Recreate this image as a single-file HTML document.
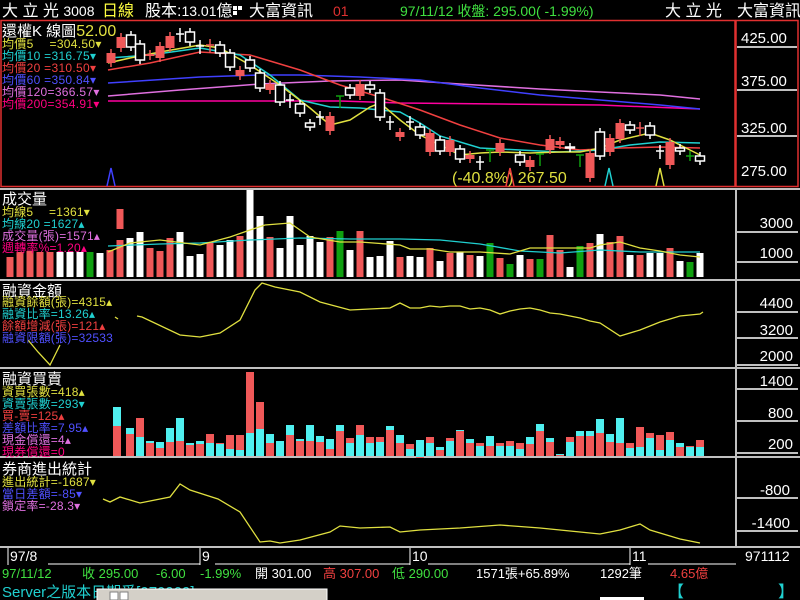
<!DOCTYPE html>
<html><head><meta charset="utf-8"><style>
html,body{margin:0;padding:0;background:#000;width:800px;height:600px;overflow:hidden}
svg{display:block}
text{font-family:"Liberation Sans","Noto Sans CJK TC",sans-serif}
</style></head><body>
<svg id="s" width="800" height="600" xmlns="http://www.w3.org/2000/svg">
<rect width="800" height="600" fill="#000"/>
<g font-size="16">
<text x="2" y="16" fill="#fff">大 立 光 <tspan font-size="14">3008</tspan></text>
<text x="102" y="16" fill="#ffff40">日線</text>
<text x="145" y="16" fill="#fff">股本:<tspan font-size="14">13.01</tspan>億</text>
<rect x="233" y="6" width="4" height="4" fill="#fff"/><rect x="238" y="6" width="4" height="4" fill="#fff"/><rect x="233" y="11" width="4" height="4" fill="#fff"/>
<text x="249" y="16" fill="#fff">大富資訊</text>
<text x="333" y="16" fill="#e03030" font-size="14">01</text>
<text x="400" y="16" fill="#40e040" font-size="14">97/11/12 收盤: 295.00( -1.99%)</text>
<text x="665" y="16" fill="#fff">大 立 光</text>
<text x="737" y="16" fill="#fff">大富資訊</text>
</g>
<rect x="1" y="20.5" width="734" height="166" fill="none" stroke="#e03030" stroke-width="1.5"/>
<rect x="736" y="20.5" width="62" height="166" fill="none" stroke="#e03030" stroke-width="1.5"/>
<g stroke="#c0c0c0" stroke-width="2">
<line x1="737" y1="47" x2="797" y2="47"/><line x1="737" y1="90" x2="797" y2="90"/><line x1="737" y1="136" x2="797" y2="136"/>
</g>
<g fill="#fff" font-size="15">
<text x="741" y="43">425.00</text><text x="741" y="86">375.00</text><text x="741" y="133">325.00</text><text x="741" y="176">275.00</text>
</g>
<g id="ma" fill="none" stroke-width="1.5">
<polyline stroke="#ff00a0" points="108,101 200,101 340,101 400,103 500,104 600,105 700,109"/>
<polyline stroke="#e070e0" points="108,96 180,90 260,84 330,81 400,80 460,84 540,89 600,92 660,95 700,99"/>
<polyline stroke="#4040ff" points="108,83 200,77 260,75 300,75 360,77 420,80 480,88 540,95 600,100 660,105 700,109"/>
<polyline stroke="#f04040" points="108,70 150,63 200,52 250,55 300,70 340,85 380,97 420,110 460,125 500,138 540,145 580,150 620,148 660,147 700,148"/>
<polyline stroke="#20d0d0" points="108,58 150,55 200,48 240,55 270,75 300,100 330,107 360,108 380,110 400,112 420,123 440,136 480,148 520,150 560,152 600,150 630,145 660,142 700,143"/>
<polyline stroke="#e0e040" points="108,63 130,58 160,52 200,45 220,48 250,65 280,85 310,108 330,125 350,120 370,107 380,103 400,120 420,135 440,145 460,155 480,153 500,152 530,153 560,152 580,152 600,148 620,140 650,133 670,140 690,150 700,155"/>
</g>
<g id="cd"></g>
<g font-size="15">
<text x="2" y="36" fill="#fff">還權K 線圖<tspan fill="#e0e040" font-size="16">52.00</tspan></text>
</g>
<g font-size="12" letter-spacing="0.3">
<text x="2" y="48" fill="#e0e040">均價5　 =304.50▾</text>
<text x="2" y="60" fill="#20d0d0">均價10 =316.75▾</text>
<text x="2" y="72" fill="#f04040">均價20 =310.50▾</text>
<text x="2" y="84" fill="#5050ff">均價60 =350.84▾</text>
<text x="2" y="96" fill="#e070e0">均價120=366.57▾</text>
<text x="2" y="108" fill="#ff0080">均價200=354.91▾</text>
</g>
<text x="452" y="183" fill="#e0e040" font-size="16">(-40.8%) 267.50</text>
<g fill="none" stroke-width="1.5">
<path d="M107,186 L111,168 L115,186" stroke="#4040ff"/>
<path d="M506,186 L510,168 L514,186" stroke="#f04040"/>
<path d="M605,186 L609,168 L613,186" stroke="#20d0d0"/>
<path d="M656,186 L660,168 L664,186" stroke="#e0e040"/>
</g>
<g stroke="#c0c0c0" stroke-width="2">
<line x1="0" y1="189" x2="800" y2="189"/>
<line x1="0" y1="280" x2="800" y2="280"/>
<line x1="0" y1="368" x2="800" y2="368"/>
<line x1="0" y1="457" x2="800" y2="457"/>
<line x1="0" y1="547" x2="800" y2="547"/>
<line x1="736" y1="189" x2="736" y2="547"/>
<line x1="737" y1="232" x2="798" y2="232"/><line x1="737" y1="262" x2="798" y2="262"/>
<line x1="737" y1="312" x2="798" y2="312"/><line x1="737" y1="338" x2="798" y2="338"/><line x1="737" y1="365" x2="798" y2="365"/>
<line x1="737" y1="389" x2="798" y2="389"/><line x1="737" y1="421" x2="798" y2="421"/><line x1="737" y1="453" x2="798" y2="453"/>
<line x1="737" y1="498" x2="798" y2="498"/><line x1="737" y1="531" x2="798" y2="531"/>
</g>
<g fill="#fff" font-size="15" text-anchor="end">
<text x="793" y="228">3000</text><text x="793" y="258">1000</text>
<text x="793" y="308">4400</text><text x="793" y="335">3200</text><text x="793" y="361">2000</text>
<text x="793" y="386">1400</text><text x="793" y="418">800</text><text x="793" y="449">200</text>
<text x="790" y="495">-800</text><text x="790" y="528">-1400</text>
</g>
<g id="vb"></g>
<g id="tb"></g>
<g fill="none" stroke-width="1.3">
<polyline stroke="#20d0d0" points="108,246 160,244 200,243 250,240 300,238 350,239 400,239 440,240 480,244 520,251 560,253 600,250 640,252 680,252 700,252"/>
<polyline stroke="#e0e040" points="108,252 130,243 160,240 200,245 230,237 250,230 265,225 290,223 310,237 340,242 360,242 400,245 410,249 430,249 450,252 480,252 510,254 530,248 560,248 590,248 600,245 620,242 640,248 660,251 680,255 700,257"/>
<polyline stroke="#e0e040" points="28,340 38,352 50,365 60,345"/>
<polyline stroke="#e0e040" points="115,317 118,319"/>
<polyline stroke="#e0e040" points="137,316 142,317 180,335 200,337 220,333 240,320 255,290 262,283 275,287 300,292 320,302 350,310 390,308 400,303 410,308 420,308 430,306 440,307 450,306 460,306 470,309 480,308 490,310 500,314 510,311 520,309 530,308 540,310 550,313 560,314 570,316 580,318 590,321 600,323 620,336 640,330 660,322 680,316 700,314 703,312"/>
<polyline stroke="#e0e040" points="103,499 110,502 120,497 140,503 170,497 180,484 190,490 218,499 240,512 260,542 270,541 280,543 300,540 330,532 340,526 360,528 390,527 400,532 420,530 460,528 500,525 540,528 580,532 600,534 620,530 640,524 650,530 670,536 680,539 700,543"/>
</g>
<g font-size="15" fill="#fff"><text x="2" y="204">成交量</text><text x="2" y="296">融資金額</text><text x="2" y="384">融資買賣</text><text x="2" y="474">券商進出統計</text></g>
<g font-size="12" letter-spacing="0.2">
<text x="2" y="216" fill="#e0e040">均線5　 =1361▾</text>
<text x="2" y="228" fill="#20d0d0">均線20 =1627▴</text>
<text x="2" y="240" fill="#e070e0">成交量(張)=1571▴</text>
<text x="2" y="252" fill="#ff0080">週轉率%=1.20▴</text>
<text x="2" y="306" fill="#e0e040">融資餘額(張)=4315▴</text>
<text x="2" y="318" fill="#20d0d0">融資比率=13.26▴</text>
<text x="2" y="330" fill="#f04040">餘額增減(張)=121▴</text>
<text x="2" y="342" fill="#5050ff">融資限額(張)=32533</text>
<text x="2" y="396" fill="#e0e040">資買張數=418▴</text>
<text x="2" y="408" fill="#20d0d0">資賣張數=293▾</text>
<text x="2" y="420" fill="#f04040">買-賣=125▴</text>
<text x="2" y="432" fill="#5050ff">差額比率=7.95▴</text>
<text x="2" y="444" fill="#e070e0">現金償還=4▴</text>
<text x="2" y="456" fill="#ff0080">現券償還=0</text>
<text x="2" y="486" fill="#e0e040">進出統計=-1687▾</text>
<text x="2" y="498" fill="#5050ff">當日差額=-85▾</text>
<text x="2" y="510" fill="#e070e0">鎖定率=-28.3▾</text>
</g>
<g stroke="#fff" stroke-width="1">
<line x1="8" y1="548" x2="8" y2="565"/><line x1="200" y1="548" x2="200" y2="565"/><line x1="410" y1="548" x2="410" y2="565"/><line x1="630" y1="548" x2="630" y2="565"/>
<line x1="48" y1="564" x2="200" y2="564"/><line x1="215" y1="564" x2="410" y2="564"/><line x1="428" y1="564" x2="630" y2="564"/><line x1="648" y1="564" x2="736" y2="564"/>
</g>
<g fill="#fff" font-size="14"><text x="10" y="561">97/8</text><text x="202" y="561">9</text><text x="412" y="561">10</text><text x="632" y="561">11</text><text x="745" y="561">971112</text></g>
<g font-size="13">
<text x="2" y="578" fill="#40e040">97/11/12</text>
<text x="82" y="578" fill="#40e040">收 295.00</text>
<text x="156" y="578" fill="#40e040">-6.00</text>
<text x="200" y="578" fill="#40e040">-1.99%</text>
<text x="255" y="578" fill="#fff">開 301.00</text>
<text x="323" y="578" fill="#f04040">高 307.00</text>
<text x="392" y="578" fill="#40e040">低 290.00</text>
<text x="476" y="578" fill="#fff">1571張+65.89%</text>
<text x="600" y="578" fill="#fff">1292筆</text>
<text x="670" y="578" fill="#f04040">4.65億</text>
</g>
<text x="2" y="597" fill="#20d0d0" font-size="15">Server之版本日期爲[970909]</text>
<rect x="97" y="589" width="230" height="12" fill="#d4d0c8" stroke="#fff"/>
<rect x="110" y="592" width="8" height="8" fill="#fff" stroke="#808080"/><rect x="120" y="592" width="8" height="8" fill="#fff" stroke="#808080"/>
<rect x="600" y="597" width="44" height="3" fill="#fff"/>
<text x="668" y="597" fill="#20d0d0" font-size="16">【</text>
<text x="778" y="597" fill="#20d0d0" font-size="16">】</text>
</svg>
<script>
var NS="http://www.w3.org/2000/svg";
function R(g,x,y,w,h,f,st){var r=document.createElementNS(NS,"rect");r.setAttribute("x",x);r.setAttribute("y",y);r.setAttribute("width",w);r.setAttribute("height",Math.max(h,1));r.setAttribute("fill",f);if(st){r.setAttribute("stroke",st);r.setAttribute("stroke-width","1.5");}g.appendChild(r);}
function L(g,x1,y1,x2,y2,c){var l=document.createElementNS(NS,"line");l.setAttribute("x1",x1);l.setAttribute("y1",y1);l.setAttribute("x2",x2);l.setAttribute("y2",y2);l.setAttribute("stroke",c);l.setAttribute("stroke-width","1.5");g.appendChild(l);}
var RED="#f05858",G="#10a010",W="#fff";
var c=[[111,'r',53,63],[121,'r',37,48],[131,'w',35,47],[140,'w',44,60],[150,'r',54,56],[160,'r',46,58],[170,'r',36,48],[180,'t',34,34],[190,'w',32,42],[200,'t',46,46],[210,'R',45,45],[220,'w',45,53],[230,'w',53,67],[240,'r',70,76],[250,'w',60,68],[260,'w',73,88],[270,'r',84,90],[280,'w',85,102],[290,'t',100,100],[300,'w',104,113],[310,'w',123,127],[320,'t',117,117],[330,'r',116,131],[340,'g',96,96],[350,'w',88,95],[360,'r',84,96],[370,'w',85,89],[380,'w',93,117],[390,'t',122,122],[400,'r',132,137],[410,'t',122,122],[420,'w',127,135],[430,'r',133,152],[440,'w',140,151],[450,'r',140,152],[460,'w',149,159],[470,'r',155,159],[480,'t',162,162],[490,'g',150,150],[500,'r',143,152],[520,'w',155,162],[530,'r',160,167],[540,'g',154,154],[550,'r',139,150],[560,'r',141,145],[570,'w',147,148],[580,'g',155,155],[590,'r',153,178],[600,'w',132,156],[610,'r',138,152],[620,'r',123,139],[630,'w',125,130],[640,'R',128,128],[650,'w',126,135],[660,'t',151,151],[670,'r',142,165],[680,'w',148,151],[690,'G',156,156],[700,'w',156,161]];
var g=document.getElementById("cd");
c.forEach(function(a){var x=a[0],t=a[1],y1=a[2],y2=a[3];
 if(t=='r'){L(g,x,y1-4,x,y2+4,RED);R(g,x-4.5,y1,9,y2-y1,RED);}
 else if(t=='w'){L(g,x,y1-4,x,y2+4,W);R(g,x-4.5,y1,9,y2-y1,"#000",W);}
 else if(t=='t'){L(g,x,y1-6,x,y2+8,W);L(g,x-4,y1,x+4,y1,W);}
 else if(t=='R'){L(g,x,y1-6,x,y2+8,RED);L(g,x-4,y1,x+4,y1,RED);}
 else if(t=='G'){L(g,x,y1-5,x,y2+5,G);L(g,x-4,y1,x+4,y1,G);}
 else {L(g,x,y1,x,y2+12,G);L(g,x-4,y1,x+4,y1,G);}
});
var v=[[10,'r',257],[20,'r',252],[30,'r',251],[40,'r',252],[50,'r',252],[60,'w',252],[70,'w',252],[80,'w',252],[90,'g',252],[100,'w',253],[110,'r',250],[120,'r',240],[130,'w',238],[140,'w',232],[150,'r',248],[160,'r',251],[170,'r',238],[180,'w',232],[190,'w',256],[200,'w',254],[210,'r',242],[220,'w',245],[230,'w',240],[240,'r',236],[250,'w',190],[260,'w',216],[270,'r',237],[280,'w',248],[290,'w',216],[300,'w',245],[310,'w',236],[320,'w',242],[330,'r',237],[340,'g',231],[350,'w',250],[360,'r',231],[370,'w',257],[380,'w',256],[390,'w',241],[400,'r',257],[410,'w',256],[420,'w',257],[430,'r',248],[440,'w',261],[450,'r',253],[460,'w',252],[470,'r',255],[480,'w',256],[490,'g',243],[500,'r',258],[510,'g',264],[520,'w',255],[530,'r',259],[540,'g',259],[550,'r',235],[560,'r',250],[570,'w',267],[580,'g',246],[590,'r',243],[600,'w',234],[610,'r',242],[620,'r',236],[630,'w',255],[640,'r',255],[650,'w',253],[660,'w',253],[670,'r',248],[680,'w',261],[690,'g',262],[700,'w',253]];
var vg=document.getElementById("vb");
v.forEach(function(a){R(vg,a[0]-3.5,a[2],7,277-a[2],a[1]=='r'?RED:a[1]=='g'?G:W);});
R(vg,116.5,209,7,20,RED);
var C="#50f0f0";
var t=[[117,407,426,'c'],[130,428,434,'c'],[140,418,437,'r'],[150,441,443,'c'],[160,442,448,'c'],[170,428,442,'c'],[180,418,441,'c'],[190,443,445,'c'],[200,441,444,'c'],[210,434,443,'r'],[220,443,444,'r'],[230,435,449,'r'],[240,435,450,'r'],[250,372,433,'r'],[260,402,429,'r'],[270,434,443,'c'],[280,441,441,'r'],[290,425,435,'c'],[300,439,441,'c'],[310,425,441,'c'],[320,436,442,'c'],[330,439,449,'c'],[340,425,431,'c'],[350,438,443,'r'],[360,425,435,'r'],[370,437,443,'r'],[380,437,442,'r'],[390,426,430,'c'],[400,435,443,'c'],[410,444,449,'r'],[420,440,457,'c'],[430,437,443,'r'],[440,447,450,'c'],[450,438,441,'r'],[460,430,431,'c'],[470,439,443,'c'],[480,443,446,'r'],[490,436,446,'c'],[500,443,446,'r'],[510,441,446,'r'],[520,443,449,'r'],[530,437,444,'c'],[540,424,431,'c'],[550,438,442,'c'],[560,454,455,'c'],[570,437,442,'r'],[580,431,436,'c'],[590,431,436,'c'],[600,419,433,'c'],[610,434,442,'c'],[620,418,443,'c'],[630,443,448,'r'],[640,427,447,'r'],[650,433,438,'r'],[660,435,450,'r'],[670,432,440,'r'],[680,443,447,'c'],[690,446,447,'r'],[700,440,447,'r']];
var tg=document.getElementById("tb");
t.forEach(function(a){var top=a[3]=='c'?C:RED,bot=a[3]=='c'?RED:C;R(tg,a[0]-4,a[1],8,a[2]-a[1],top);R(tg,a[0]-4,a[2],8,456-a[2],bot);});
</script>
</body></html>
